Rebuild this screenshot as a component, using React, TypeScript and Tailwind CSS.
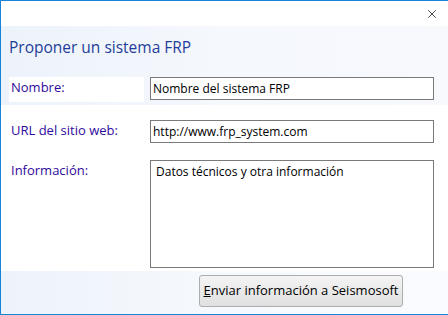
import { X } from "lucide-react"

const font = { fontFamily: '"Open Sans", "Noto Sans", sans-serif' }

export default function App() {
  return (
    <div
      className="w-[448px] h-[315px] flex flex-col border-l border-t border-b border-[#1883d7] bg-white overflow-hidden"
      style={font}
    >
      <div className="h-[25px] shrink-0 flex items-center justify-end pr-[9px] bg-white">
        <X size={14} strokeWidth={1.2} className="text-black" />
      </div>

      <div className="h-[79px] shrink-0 flex flex-col bg-gradient-to-r from-[#edf3fb] via-[#f5f8fd] to-[#f7f9fd]">
        <div
          className="h-[51px] flex items-center pl-[8px] pb-[7px] text-[15.5px] text-[#1f3d99]"
          style={{ fontFamily: '"Open Sans", "Noto Sans", sans-serif' }}
        >
          Proponer un sistema FRP
        </div>
        <div className="flex items-start">
          <div className="ml-[8px] w-[135px] h-[25px] bg-white flex items-center pl-[2px] pb-[3px] text-[13px] text-[#2f0a9c]">
            Nombre:
          </div>
          <input
            readOnly
            value="Nombre del sistema FRP"
            className="ml-[6px] w-[284px] h-[23px] border border-[#7a7a7a] bg-white px-[2px] text-[12px] text-black outline-none"
            style={font}
          />
        </div>
      </div>

      <div className="h-[166px] shrink-0 bg-white flex flex-col">
        <div className="flex items-start pt-[15px]">
          <div className="ml-[10px] w-[139px] h-[23px] flex items-center pb-[1px] text-[13px] text-[#2f0a9c]">
            URL del sitio web:
          </div>
          <input
            readOnly
            value="http://www.frp_system.com"
            className="w-[284px] h-[23px] border border-[#7a7a7a] bg-white px-[2px] text-[12px] text-black outline-none"
            style={font}
          />
        </div>
        <div className="flex items-start pt-[17px]">
          <div className="ml-[10px] w-[139px] h-[22px] flex items-center text-[13px] text-[#2f0a9c]">
            Información:
          </div>
          <textarea
            readOnly
            value="Datos técnicos y otra información"
            className="w-[284px] h-[108px] border border-[#7a7a7a] bg-white px-[5px] py-[2px] text-[12px] text-black outline-none resize-none"
            style={font}
          />
        </div>
      </div>

      <div className="flex-1 flex items-start justify-end pr-[45px] pt-[4px] bg-gradient-to-r from-[#edf3fb] via-[#f6f9fd] to-[#f9fbfe]">
        <button className="w-[204px] h-[32px] rounded-[3px] border border-[#adadad] bg-gradient-to-b from-[#f4f4f4] to-[#e0e0e0] text-[13px] text-black">
          <span className="underline">E</span>nviar información a Seismosoft
        </button>
      </div>
    </div>
  )
}
